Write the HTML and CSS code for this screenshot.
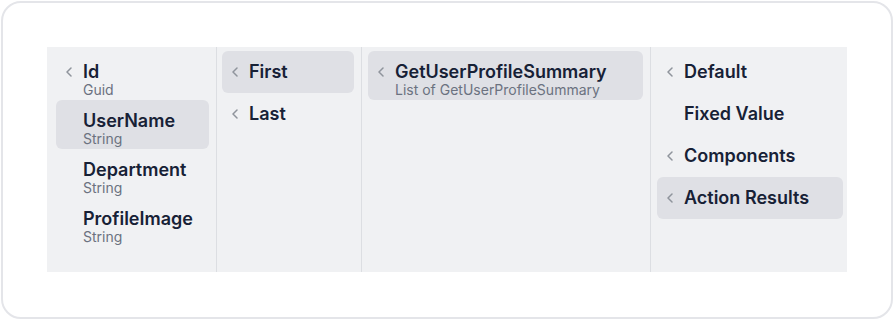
FILE: index.html
```html
<!DOCTYPE html>
<html lang="en">
<head>
  <meta charset="UTF-8">
  <title>Binding picker</title>
  <link rel="stylesheet" href="styles.css">
</head>
<body>
  <div class="card">
    <div class="browser">
      <div class="col col-first">
        <div class="item">
          <span class="chev"><svg viewBox="0 0 8 10" width="8" height="10"><path d="M6 1 L2 5 L6 9"/></svg></span>
          <div class="text"><div class="title">Id</div><div class="sub">Guid</div></div>
        </div>
        <div class="item active">
          <span class="chev"></span>
          <div class="text"><div class="title">UserName</div><div class="sub">String</div></div>
        </div>
        <div class="item">
          <span class="chev"></span>
          <div class="text"><div class="title">Department</div><div class="sub">String</div></div>
        </div>
        <div class="item">
          <span class="chev"></span>
          <div class="text"><div class="title">ProfileImage</div><div class="sub">String</div></div>
        </div>
      </div>

      <div class="col col-second">
        <div class="item single active">
          <span class="chev"><svg viewBox="0 0 8 10" width="8" height="10"><path d="M6 1 L2 5 L6 9"/></svg></span>
          <div class="text"><div class="title">First</div></div>
        </div>
        <div class="item single">
          <span class="chev"><svg viewBox="0 0 8 10" width="8" height="10"><path d="M6 1 L2 5 L6 9"/></svg></span>
          <div class="text"><div class="title">Last</div></div>
        </div>
      </div>

      <div class="col col-third">
        <div class="item active">
          <span class="chev"><svg viewBox="0 0 8 10" width="8" height="10"><path d="M6 1 L2 5 L6 9"/></svg></span>
          <div class="text"><div class="title">GetUserProfileSummary</div><div class="sub">List of GetUserProfileSummary</div></div>
        </div>
      </div>

      <div class="col col-last">
        <div class="item single">
          <span class="chev"><svg viewBox="0 0 8 10" width="8" height="10"><path d="M6 1 L2 5 L6 9"/></svg></span>
          <div class="text"><div class="title">Default</div></div>
        </div>
        <div class="item single">
          <span class="chev"></span>
          <div class="text"><div class="title">Fixed Value</div></div>
        </div>
        <div class="item single">
          <span class="chev"><svg viewBox="0 0 8 10" width="8" height="10"><path d="M6 1 L2 5 L6 9"/></svg></span>
          <div class="text"><div class="title">Components</div></div>
        </div>
        <div class="item single active">
          <span class="chev"><svg viewBox="0 0 8 10" width="8" height="10"><path d="M6 1 L2 5 L6 9"/></svg></span>
          <div class="text"><div class="title">Action Results</div></div>
        </div>
      </div>
    </div>
  </div>
</body>
</html>
```

FILE: styles.css
```css
html, body {
  margin: 0;
  background: #ffffff;
}

body {
  padding: 1px;
  font-family: "Inter", "Noto Sans", sans-serif;
  color: #172136;
}

.card {
  box-sizing: border-box;
  width: 892px;
  height: 318px;
  border: 2px solid #e4e5e9;
  border-radius: 20px;
  padding: 44px;
}

.browser {
  display: flex;
  height: 225px;
  background: #f0f1f3;
}

.col {
  box-sizing: border-box;
  padding: 4px 7px 4px 6px;
  border-right: 1px solid #dcdee2;
  display: flex;
  flex-direction: column;
}

.col-first {
  width: 170px;
  padding-left: 9px;
}

.col-second {
  width: 145px;
  padding-left: 5px;
}

.col-third {
  width: 289px;
}

.col-last {
  width: 196px;
  border-right: none;
  padding-right: 4px;
}

.item {
  display: flex;
  align-items: flex-start;
  height: 49px;
  box-sizing: border-box;
  padding: 10px 0 0 9px;
  border-radius: 6px;
}

.item.single {
  height: 42px;
}

.item.active {
  background: #dfe0e5;
}

.chev {
  width: 18px;
  height: 21px;
  flex: none;
  display: flex;
  align-items: center;
}

.chev svg {
  fill: none;
  stroke: #8f949c;
  stroke-width: 1.5;
  stroke-linecap: round;
  stroke-linejoin: round;
}

.text {
  min-width: 0;
}

.title {
  font-size: 18px;
  line-height: 21px;
  font-weight: 600;
  white-space: nowrap;
}

.sub {
  font-size: 14px;
  line-height: 16px;
  color: #6b7280;
  white-space: nowrap;
}
```
